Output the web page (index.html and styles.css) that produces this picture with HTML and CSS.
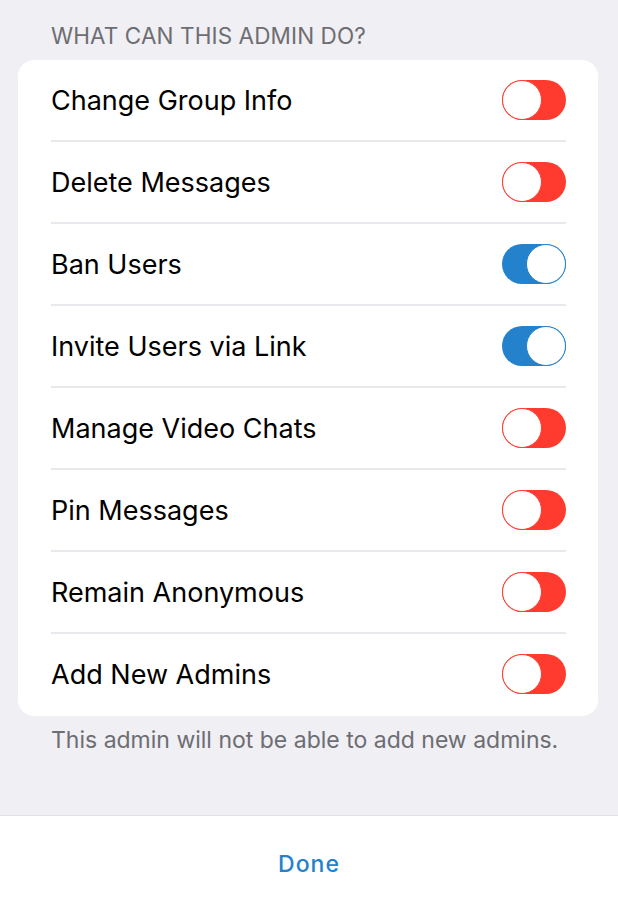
FILE: index.html
```html
<!DOCTYPE html>
<html>
<head>
<meta charset="utf-8">
<link rel="stylesheet" href="styles.css">
</head>
<body>
<div class="page">
  <div class="content">
    <div class="section-title">WHAT CAN THIS ADMIN DO?</div>
    <div class="card">
      <div class="row"><span class="label">Change Group Info</span><span class="toggle off"><span class="knob"></span></span></div>
      <div class="row"><span class="label">Delete Messages</span><span class="toggle off"><span class="knob"></span></span></div>
      <div class="row"><span class="label">Ban Users</span><span class="toggle on"><span class="knob"></span></span></div>
      <div class="row"><span class="label">Invite Users via Link</span><span class="toggle on"><span class="knob"></span></span></div>
      <div class="row"><span class="label">Manage Video Chats</span><span class="toggle off"><span class="knob"></span></span></div>
      <div class="row"><span class="label">Pin Messages</span><span class="toggle off"><span class="knob"></span></span></div>
      <div class="row"><span class="label">Remain Anonymous</span><span class="toggle off"><span class="knob"></span></span></div>
      <div class="row"><span class="label">Add New Admins</span><span class="toggle off"><span class="knob"></span></span></div>
    </div>
    <div class="section-footer">This admin will not be able to add new admins.</div>
  </div>
  <div class="bottom-bar"><span class="done">Done</span></div>
</div>
</body>
</html>
```
FILE: styles.css
```css
html, body {
  margin: 0;
  padding: 0;
}
body {
  background: #efeff4;
  font-family: Inter, "Noto Sans", sans-serif;
  -webkit-font-smoothing: antialiased;
}
.page {
  height: 904px;
  display: flex;
  flex-direction: column;
}
.content {
  flex: 1;
  padding: 0 20px 0 18px;
}
.section-title {
  height: 60px;
  padding: 22px 0 0 33px;
  box-sizing: border-box;
  font-size: 22.5px;
  line-height: 27px;
  color: #6d6d72;
  letter-spacing: 0.1px;
}
.card {
  background: #fff;
  border-radius: 16px;
  padding: 0 32px 0 33px;
  width: 580px;
  box-sizing: border-box;
}
.row {
  height: 82px;
  display: flex;
  align-items: center;
  justify-content: space-between;
  border-bottom: 2px solid #e9e9ed;
  box-sizing: border-box;
}
.row:last-child {
  border-bottom: none;
  padding-bottom: 2px;
}
.label {
  font-size: 27px;
  color: #000;
  padding-top: 1px;
}
.toggle {
  width: 64px;
  height: 40px;
  border-radius: 20px;
  display: flex;
  align-items: center;
  box-sizing: border-box;
}
.toggle .knob {
  width: 40px;
  height: 40px;
  border-radius: 50%;
  background: #fff;
  box-sizing: border-box;
}
.toggle.off {
  background: #ff3b30;
  justify-content: flex-start;
}
.toggle.off .knob {
  border: 1.5px solid #ff3b30;
}
.toggle.on {
  background: #2481cc;
  justify-content: flex-end;
}
.toggle.on .knob {
  border: 1.5px solid #2481cc;
}
.section-footer {
  padding: 10px 0 0 33px;
  font-size: 23px;
  line-height: 28px;
  color: #6d6d72;
}
.bottom-bar {
  height: 89px;
  background: #fff;
  border-top: 1px solid #e0e0e4;
  display: flex;
  align-items: center;
  justify-content: center;
  box-sizing: border-box;
  padding-top: 7px;
}
.done {
  font-size: 23px;
  color: #2481cc;
  font-weight: 500;
  letter-spacing: 1px;
}
```
